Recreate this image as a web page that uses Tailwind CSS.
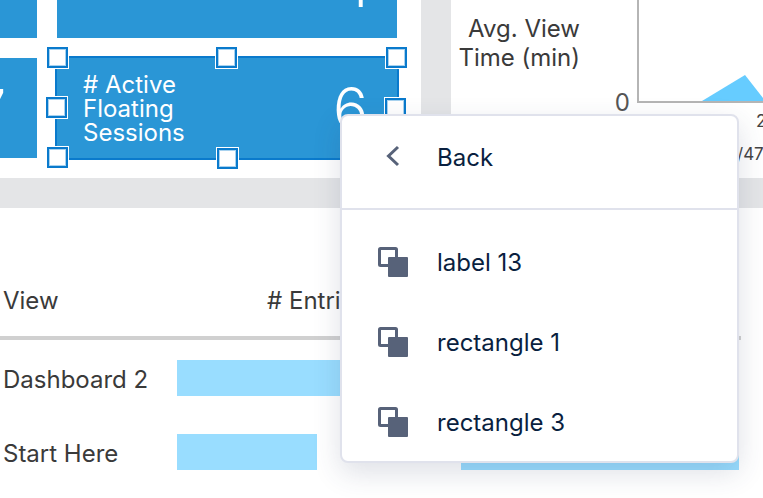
<!DOCTYPE html>
<html lang="en">
<head>
<meta charset="UTF-8">
<title>Dashboard designer</title>
<script src="https://cdn.jsdelivr.net/npm/@tailwindcss/browser@4"></script>
</head>
<body class="bg-white">
<div class="relative w-[763px] h-[498px] overflow-hidden bg-white font-['Inter','Liberation_Sans',sans-serif] text-[24px] text-[#3a3a3a]">

    <!-- top row: tiles + chart -->
    <div class="flex h-[178px] overflow-hidden">
        <div class="w-[421px] shrink-0 overflow-hidden">
            <div class="grid grid-cols-[37px_340px] grid-rows-[38px_100px] gap-5">
                <div class="bg-[#2a96d6]"></div>
                <div class="relative bg-[#2a96d6] overflow-hidden">
                    <span class="absolute right-[29px] bottom-[23px] text-[56px] leading-none font-light text-white">1</span>
                </div>
                <div class="relative bg-[#2a96d6] overflow-hidden">
                    <span class="absolute right-[31px] top-[24px] text-[56px] leading-none font-light text-white">7</span>
                </div>
                <!-- selected tile -->
                <div class="relative -m-[2px] flex items-center justify-between border-2 border-[#0a7acc] bg-[#2a96d6] pl-[27px] pr-[29px] text-white">
                    <div class="leading-[24px] w-[120px] pt-[1px] -ml-px">
                        # Active<br>Floating<br>Sessions
                    </div>
                    <span class="text-[58px] leading-none font-light">6</span>

                    <span class="absolute left-[-10px] top-[-11px] w-[21px] h-[21px] bg-white border-2 border-[#0a7acc] shadow-[inset_0_0_0_1px_#a8d2ef] outline outline-1 outline-white"></span>
                    <span class="absolute left-[159px] top-[-11px] w-[21px] h-[21px] bg-white border-2 border-[#0a7acc] shadow-[inset_0_0_0_1px_#a8d2ef] outline outline-1 outline-white"></span>
                    <span class="absolute right-[-10px] top-[-11px] w-[21px] h-[21px] bg-white border-2 border-[#0a7acc] shadow-[inset_0_0_0_1px_#a8d2ef] outline outline-1 outline-white"></span>
                    <span class="absolute left-[-11px] top-[39px] w-[21px] h-[21px] bg-white border-2 border-[#0a7acc] shadow-[inset_0_0_0_1px_#a8d2ef] outline outline-1 outline-white"></span>
                    <span class="absolute right-[-9px] top-[40px] w-[21px] h-[21px] bg-white border-2 border-[#0a7acc] shadow-[inset_0_0_0_1px_#a8d2ef] outline outline-1 outline-white"></span>
                    <span class="absolute left-[-10px] bottom-[-10px] w-[21px] h-[21px] bg-white border-2 border-[#0a7acc] shadow-[inset_0_0_0_1px_#a8d2ef] outline outline-1 outline-white"></span>
                    <span class="absolute left-[160px] bottom-[-11px] w-[21px] h-[21px] bg-white border-2 border-[#0a7acc] shadow-[inset_0_0_0_1px_#a8d2ef] outline outline-1 outline-white"></span>
                </div>
            </div>
        </div>
        <div class="w-[30px] shrink-0 bg-[#e4e5e7]"></div>
        <div class="relative flex flex-1 items-start">
            <div class="w-[129px] shrink-0 pt-[14px] text-right leading-[29px]">Avg. View<br>Time (min)</div>
            <div class="w-[50px] shrink-0 pt-[88px] text-right leading-[29px] text-[#555]">0</div>
            <div class="relative ml-[7px] h-[103px] flex-1 border-b-2 border-l-2 border-[#b5b5b5]">
                <svg class="absolute left-0 top-0" width="124" height="101" viewBox="0 0 124 101">
                    <polygon points="63,101 106,75 124,98 124,101" fill="#66ccff"/>
                </svg>
            </div>
            <span class="absolute left-[305px] top-[110px] text-[17px] leading-[22px] text-[#444]">2</span>
            <span class="absolute left-[286px] top-[143px] text-[17px] leading-[22px] text-[#444]">/47</span>
        </div>
    </div>

    <div class="h-[30px] bg-[#e4e5e7]"></div>

    <!-- table -->
    <div class="w-[741px]">
        <div class="flex h-[132px] items-end border-b-4 border-[#d0d0d0] pb-[21px] pl-[3px]">
            <span class="w-[264px] leading-[29px]">View</span>
            <span class="leading-[29px]"># Entries</span>
        </div>
        <div class="flex h-[76px] items-center pl-[3px]">
            <span class="w-[174px] pt-[2px] leading-[29px]">Dashboard 2</span>
            <div class="h-9 w-[230px] bg-[#99ddff]"></div>
        </div>
        <div class="flex h-[72px] items-center pl-[3px]">
            <span class="w-[174px] pt-[2px] leading-[29px]">Start Here</span>
            <div class="h-9 w-[140px] bg-[#99ddff]"></div>
            <div class="ml-[144px] h-9 w-[278px] bg-[#99ddff]"></div>
        </div>
    </div>

    <!-- context menu -->
    <div class="absolute left-[340px] top-[114px] w-[399px] h-[349px] rounded-lg border-2 border-[#e0e2ec] bg-white text-[#0a1f3f] shadow-[0_10px_28px_rgba(50,60,100,0.16)]">
        <div class="flex h-[94px] items-center border-b-2 border-[#e0e2ec] pb-[10px] pl-[43px]">
            <svg class="w-[16px] h-[22px] -translate-y-px text-[#576279]" viewBox="0 0 16 22" fill="none" stroke="currentColor" stroke-width="3">
                <path d="M13 2 L3.5 11 L13 20"/>
            </svg>
            <span class="ml-[36px] leading-[29px]">Back</span>
        </div>
        <div class="pt-[12px]">
            <div class="flex h-[80px] items-center pl-[36px]">
                <svg class="w-[30px] h-[30px] shrink-0" viewBox="0 0 30 30">
                    <rect x="1.5" y="1.5" width="17" height="17" rx="1" fill="none" stroke="#576279" stroke-width="3"/>
                    <rect x="10" y="10" width="20" height="20" rx="1" fill="#576279"/>
                </svg>
                <span class="ml-[29px] leading-[29px]">label 13</span>
            </div>
            <div class="flex h-[80px] items-center pl-[36px]">
                <svg class="w-[30px] h-[30px] shrink-0" viewBox="0 0 30 30">
                    <rect x="1.5" y="1.5" width="17" height="17" rx="1" fill="none" stroke="#576279" stroke-width="3"/>
                    <rect x="10" y="10" width="20" height="20" rx="1" fill="#576279"/>
                </svg>
                <span class="ml-[29px] leading-[29px]">rectangle 1</span>
            </div>
            <div class="flex h-[80px] items-center pl-[36px]">
                <svg class="w-[30px] h-[30px] shrink-0" viewBox="0 0 30 30">
                    <rect x="1.5" y="1.5" width="17" height="17" rx="1" fill="none" stroke="#576279" stroke-width="3"/>
                    <rect x="10" y="10" width="20" height="20" rx="1" fill="#576279"/>
                </svg>
                <span class="ml-[29px] leading-[29px]">rectangle 3</span>
            </div>
        </div>
    </div>
</div>
</body>
</html>
